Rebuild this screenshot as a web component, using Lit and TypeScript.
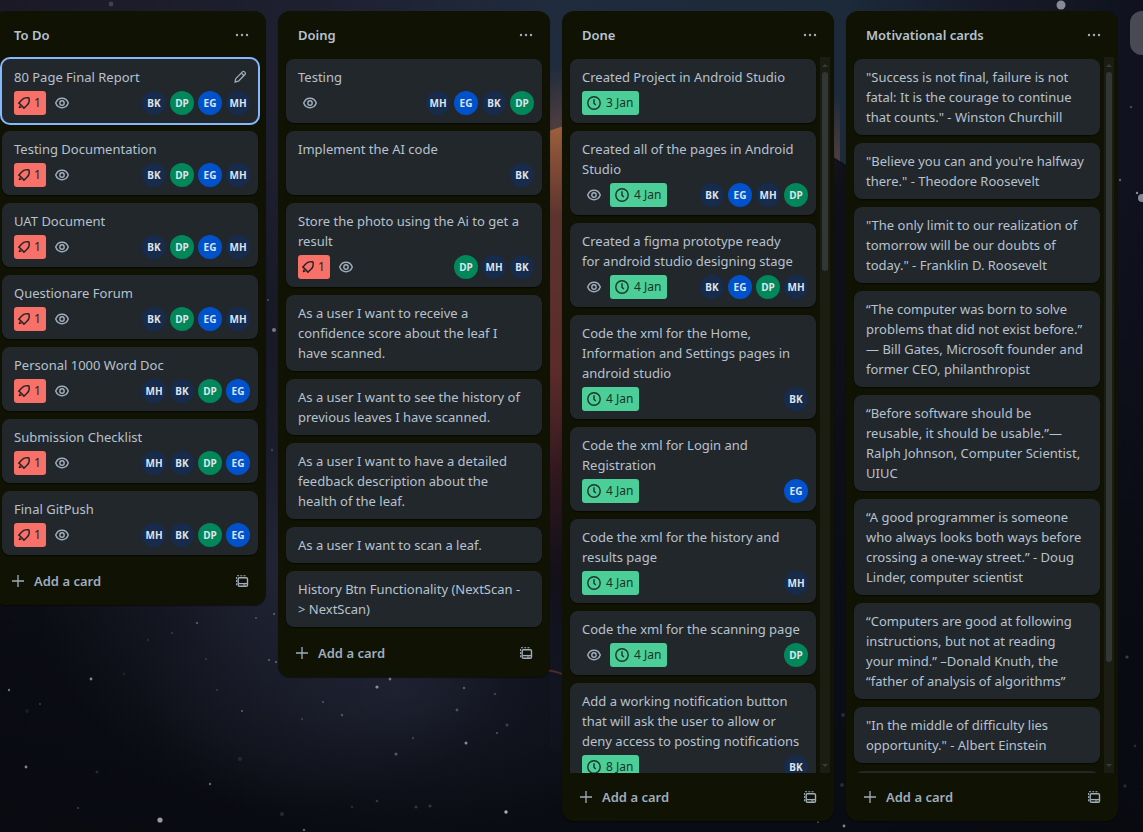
import { LitElement, html, svg, css, nothing } from "lit";
import { customElement, property } from "lit/decorators.js";
import { classMap } from "lit/directives/class-map.js";
import { styleMap } from "lit/directives/style-map.js";

type Card = {
  title: string;
  alert?: number;
  watch?: boolean;
  due?: string;
  members?: string;
  active?: boolean;
};

type List = {
  name: string;
  cards: Card[];
  thumb?: number;
};

const LISTS: List[] = [
  {
    name: "To Do",
    cards: [
      { title: "80 Page Final Report", alert: 1, watch: true, members: "BK DP EG MH", active: true },
      { title: "Testing Documentation", alert: 1, watch: true, members: "BK DP EG MH" },
      { title: "UAT Document", alert: 1, watch: true, members: "BK DP EG MH" },
      { title: "Questionare Forum", alert: 1, watch: true, members: "BK DP EG MH" },
      { title: "Personal 1000 Word Doc", alert: 1, watch: true, members: "MH BK DP EG" },
      { title: "Submission Checklist", alert: 1, watch: true, members: "MH BK DP EG" },
      { title: "Final GitPush", alert: 1, watch: true, members: "MH BK DP EG" },
    ],
  },
  {
    name: "Doing",
    cards: [
      { title: "Testing", watch: true, members: "MH EG BK DP" },
      { title: "Implement the AI code", members: "BK" },
      { title: "Store the photo using the Ai to get a result", alert: 1, watch: true, members: "DP MH BK" },
      { title: "As a user I want to receive a confidence score about the leaf I have\u00A0scanned." },
      { title: "As a user I want to see the history of previous leaves I have scanned." },
      { title: "As a user I want to have a detailed feedback description about the health of the leaf." },
      { title: "As a user I want to scan a leaf." },
      { title: "History Btn Functionality (NextScan -\u200B>\u00A0NextScan)" },
    ],
  },
  {
    name: "Done",
    thumb: 29,
    cards: [
      { title: "Created Project in Android Studio", due: "3 Jan" },
      { title: "Created all of the pages in Android Studio", watch: true, due: "4 Jan", members: "BK EG MH DP" },
      { title: "Created a figma prototype ready for\u00A0android studio designing stage", watch: true, due: "4 Jan", members: "BK EG DP MH" },
      { title: "Code the xml for the Home, Information and Settings pages in android studio", due: "4 Jan", members: "BK" },
      { title: "Code the xml for Login and Registration", due: "4 Jan", members: "EG" },
      { title: "Code the xml for the history and results page", due: "4 Jan", members: "MH" },
      { title: "Code the xml for the scanning page", watch: true, due: "4 Jan", members: "DP" },
      { title: "Add a working notification button that will ask the user to allow or deny access to posting notifications", due: "8 Jan", members: "BK" },
    ],
  },
  {
    name: "Motivational cards",
    thumb: 86,
    cards: [
      { title: "\"Success is not final, failure is not fatal: It is the courage to continue that counts.\" - Winston Churchill" },
      { title: "\"Believe you can and you're halfway there.\" - Theodore Roosevelt" },
      { title: "\"The only limit to our realization of tomorrow will be our doubts of today.\" - Franklin D. Roosevelt" },
      { title: "“The computer was born to solve problems that did not exist before.” — Bill Gates, Microsoft founder and former CEO, philanthropist" },
      { title: "“Before software should be reusable, it should be usable.”— Ralph Johnson, Computer Scientist, UIUC" },
      { title: "“A good programmer is someone who always looks both ways before crossing a one-way street.” - Doug Linder, computer scientist" },
      { title: "“Computers are good at following instructions, but not at reading your\u00A0mind.” –Donald Knuth, the “father of analysis of algorithms”" },
      { title: "\"In the middle of difficulty lies opportunity.\" - Albert Einstein" },
      { title: "" },
    ],
  },
];

const icon = (size: number, body: unknown) =>
  html`<svg width=${size} height=${size} viewBox="0 0 16 16" fill="none" stroke="currentColor" aria-hidden="true">${body}</svg>`;

const dots = () =>
  icon(16, svg`<g fill="currentColor" stroke="none"><circle cx="3" cy="8" r="1.2"/><circle cx="8" cy="8" r="1.2"/><circle cx="13" cy="8" r="1.2"/></g>`);

const pencil = () =>
  icon(16, svg`<g stroke-width="1.3" stroke-linejoin="round"><path d="M3 13.2l.8-3.6 6.600-6.700a1.500 1.500 0 0 1 2.100 0l.5.5a1.500 1.500 0 0 1 0 2.100l-6.600 6.700z"/><path d="M9.500 4.200l2.500 2.500"/></g>`);

const rocket = () =>
  icon(16, svg`<g stroke-width="1.400" stroke-linejoin="round"><path d="M2.700 8.200L6.200 4.600Q7.600 3 9.600 2.900L12.300 2.800Q13.200 2.800 13.200 3.700L13.100 6.400Q13 8.400 11.400 9.800L7.900 13.300L6.600 11.500L4.500 9.400z"/><path d="M4.200 10.400L3.300 12.700L5.600 11.800" stroke-width="1.200"/></g>`);

const eye = () =>
  icon(16, svg`<g stroke-width="1.4"><path d="M1.700 8C2.800 5 5.200 3.200 8 3.200S13.200 5 14.300 8C13.200 11 10.800 12.700 8 12.700S2.800 11 1.700 8z"/><circle cx="8" cy="8" r="2.200"/></g>`);

const clock = () =>
  icon(16, svg`<circle cx="8" cy="8" r="6.200" stroke-width="1.400"/><path d="M8 4.300V8.200L9.800 10" stroke-width="1.400"/>`);

const plus = () => icon(16, svg`<path d="M8 2v12M2 8h12" stroke-width="1.300"/>`);

const template = () =>
  icon(16, svg`<rect x="4.200" y="4.700" width="9.300" height="8.600" rx="1.300" stroke-width="1.400"/><path d="M4.500 10.600h9" stroke-width="1.300"/><path d="M9 12h2.500" stroke-width="1"/><path d="M2.600 12.300V3.600Q2.600 2.700 3.500 2.700H12.500" stroke-width="1.100" stroke-dasharray="2 1.200"/>`);

/* x, y, radius, opacity */
const STARS = [
  [1061, 5, 4.5, 0.6], [1142, 198, 4, 0.6], [1137, 193, 1.2, 0.6], [274, 330, 2, 0.5], [160, 820, 2.6, 0.7],
  [91, 679, 1.4, 0.6], [9, 690, 1.2, 0.5], [26, 767, 1.4, 0.6], [197, 623, 1.1, 0.4], [242, 711, 1, 0.4],
  [210, 784, 1.2, 0.45], [240, 759, 2, 0.12], [269, 660, 1, 0.4], [276, 662, 1, 0.45], [274, 614, 1, 0.4],
  [97, 772, 1.5, 0.15], [27, 711, 2, 0.08], [40, 704, 1, 0.25], [377, 687, 1.6, 0.6], [390, 679, 1.4, 0.5],
  [466, 743, 1.5, 0.6], [506, 812, 1.7, 0.8], [396, 754, 1.5, 0.35], [457, 710, 1.4, 0.3],
  [464, 688, 1.2, 0.35], [495, 694, 1, 0.3], [323, 702, 1, 0.35], [342, 715, 1.2, 0.3], [302, 719, 1, 0.25],
  [413, 738, 1.2, 0.2], [430, 806, 1.6, 0.2], [416, 807, 1.6, 0.18], [377, 801, 1.3, 0.2],
  [282, 814, 2, 0.15], [352, 807, 1.2, 0.15], [507, 725, 1.6, 0.22], [497, 733, 1, 0.35], [304, 830, 1.3, 0.4],
  [844, 826, 1.4, 0.6], [818, 822, 1, 0.4], [1131, 107, 1.3, 0.25], [1120, 180, 1.2, 0.4], [1127, 657, 1.6, 0.25],
  [1135, 746, 1.4, 0.15], [1125, 786, 1.8, 0.15], [111, 4, 2.4, 0.2], [843, 715, 2, 0.15], [842, 785, 2, 0.15],
  [148, 640, 1, 0.15], [124, 674, 1.6, 0.08], [172, 633, 1, 0.2], [206, 659, 1, 0.2],
  [256, 618, 1, 0.3], [217, 690, 1, 0.2], [78, 808, 0.9, 0.3], [268, 300, 1, 0.3], [272, 450, 1.2, 0.2],
];

@customElement("space-backdrop")
export class SpaceBackdrop extends LitElement {
  static styles = css`
    :host {
      display: block;
      overflow: hidden;
      background: #0a0c14;
    }
    .scene {
      display: block;
      width: 100%;
      height: 100%;
    }
  `;

  render() {
    return html`<svg class="scene" viewBox="0 0 1143 832" preserveAspectRatio="xMidYMid slice" aria-hidden="true">
      <defs>
        <linearGradient id="sky" x1="0" y1="0" x2="1" y2="0">
          <stop offset="0" stop-color="#1b1926"/>
          <stop offset="0.28" stop-color="#1e2030"/>
          <stop offset="0.48" stop-color="#202b3d"/>
          <stop offset="0.74" stop-color="#1c2a39"/>
          <stop offset="0.86" stop-color="#171b29"/>
          <stop offset="1" stop-color="#0f121e"/>
        </linearGradient>
        <linearGradient id="night" x1="0" y1="0" x2="0" y2="1">
          <stop offset="0.2" stop-color="#080a10" stop-opacity="0"/>
          <stop offset="0.75" stop-color="#080a10" stop-opacity="0.85"/>
          <stop offset="1" stop-color="#080a10" stop-opacity="0.95"/>
        </linearGradient>
        <radialGradient id="haze">
          <stop offset="0" stop-color="#30334a" stop-opacity="0.6"/>
          <stop offset="0.5" stop-color="#30334a" stop-opacity="0.25"/>
          <stop offset="1" stop-color="#30334a" stop-opacity="0"/>
        </radialGradient>
        <radialGradient id="glow">
          <stop offset="0.86" stop-color="#5e4440" stop-opacity="0.7"/>
          <stop offset="1" stop-color="#5e4440" stop-opacity="0"/>
        </radialGradient>
        <linearGradient id="planet" x1="0" y1="0" x2="0" y2="1">
          <stop offset="0" stop-color="#a66a40"/>
          <stop offset="0.06" stop-color="#8a5238"/>
          <stop offset="0.16" stop-color="#5c342f"/>
          <stop offset="0.4" stop-color="#5a2b2a"/>
          <stop offset="0.55" stop-color="#35191f"/>
          <stop offset="0.72" stop-color="#14101a"/>
          <stop offset="0.82" stop-color="#0f121c"/>
        </linearGradient>
        <linearGradient id="shade" x1="0" y1="0" x2="1" y2="0.35">
          <stop offset="0.45" stop-color="#0a0d17" stop-opacity="0"/>
          <stop offset="0.72" stop-color="#0a0d17" stop-opacity="0.95"/>
        </linearGradient>
        <clipPath id="lit-side"><rect x="550" y="0" width="593" height="832"/></clipPath>
        <clipPath id="upper"><rect x="550" y="0" width="290" height="240"/></clipPath>
      </defs>
      <rect width="1143" height="832" fill="url(#sky)"/>
      <rect width="1143" height="832" fill="url(#night)"/>
      <circle cx="662" cy="436" r="385" fill="url(#glow)" clip-path="url(#upper)"/>
      <g clip-path="url(#lit-side)">
        <circle cx="662" cy="439" r="328" fill="url(#planet)"/>
        <circle cx="662" cy="439" r="330" fill="url(#shade)"/>
      </g>
      <ellipse cx="290" cy="560" rx="260" ry="250" fill="url(#haze)"/>
      <ellipse cx="400" cy="690" rx="260" ry="150" fill="url(#haze)" opacity="0.7"/>
      <path d="M546 670q10 1 18 5" stroke="#4a2a2a" stroke-width="2" fill="none"/>
      ${STARS.map(([x, y, r, o]) => svg`<circle cx=${x} cy=${y} r=${r} fill="#d3d8e4" opacity=${o}/>`)}
    </svg>`;
  }
}

@customElement("board-card")
export class BoardCard extends LitElement {
  @property({ attribute: false }) card!: Card;

  static styles = css`
    :host {
      display: block;
      flex: none;
    }
    .card {
      min-height: 36px;
      box-sizing: border-box;
      padding: 8px 8px 8px 12px;
      border-radius: 8px;
      background: #22272b;
      box-shadow: 0 1px 1px rgba(3, 4, 4, 0.6);
    }
    .active {
      box-shadow: 0 0 0 2px #85b8ff;
    }
    .top {
      display: flex;
      align-items: flex-start;
      justify-content: space-between;
    }
    .title {
      margin: 0;
      padding-right: 4px;
      font-size: 13px;
      font-weight: 400;
      line-height: 20px;
    }
    .edit {
      display: flex;
      padding: 0;
      margin: 2px;
      border: 0;
      background: none;
      color: #9fadbc;
    }
    .meta {
      display: flex;
      justify-content: space-between;
      margin-top: 4px;
    }
    .badges,
    .members {
      display: flex;
      gap: 4px;
    }
    .badge {
      display: flex;
      align-items: center;
      gap: 4px;
      height: 24px;
      box-sizing: border-box;
      padding: 0 4px;
      border-radius: 3px;
      font-size: 12px;
      line-height: 20px;
      color: #9fadbc;
    }
    .alert {
      gap: 2px;
      padding: 0 5px 0 2px;
      background: #f87168;
      color: #1d2125;
    }
    .due {
      padding-right: 6px;
      background: #4bce97;
      color: #1c3329;
    }
    .avatar {
      display: flex;
      align-items: center;
      justify-content: center;
      width: 24px;
      height: 24px;
      border-radius: 50%;
      background: #172b4d;
      color: #dee4ea;
      font-size: 10px;
      font-weight: 700;
    }
    .dp {
      background: #00875a;
    }
    .eg {
      background: #0052cc;
    }
  `;

  render() {
    const { title, alert, watch, due, members, active } = this.card;
    const hasMeta = alert || watch || due || members;
    return html`<article class=${classMap({ card: true, active: !!active })}>
      <div class="top">
        <h3 class="title">${title}</h3>
        ${active ? html`<button class="edit" aria-label="Edit card">${pencil()}</button>` : nothing}
      </div>
      ${hasMeta
        ? html`<div class="meta">
            <div class="badges">
              ${alert ? html`<span class="badge alert">${rocket()}${alert}</span>` : nothing}
              ${watch ? html`<span class="badge">${eye()}</span>` : nothing}
              ${due ? html`<span class="badge due">${clock()}${due}</span>` : nothing}
            </div>
            <div class="members">
              ${(members ?? "")
                .split(" ")
                .filter(Boolean)
                .map((m) => html`<span class="avatar ${m.toLowerCase()}">${m}</span>`)}
            </div>
          </div>`
        : nothing}
    </article>`;
  }
}

@customElement("board-list")
export class BoardList extends LitElement {
  @property({ attribute: false }) list!: List;

  static styles = css`
    :host {
      display: flex;
      flex-direction: column;
      flex: 0 0 272px;
      box-sizing: border-box;
      max-height: 100%;
      border-radius: 12px;
      background: #101204;
      box-shadow: 0 1px 1px rgba(3, 4, 4, 0.5);
    }
    .head {
      display: flex;
      align-items: center;
      justify-content: space-between;
      flex: none;
      padding: 8px 8px 6px 20px;
    }
    .name {
      margin: 0;
      font-size: 13px;
      font-weight: 600;
      line-height: 20px;
    }
    .icon-button {
      display: flex;
      align-items: center;
      justify-content: center;
      width: 32px;
      height: 32px;
      padding: 0;
      border: 0;
      border-radius: 8px;
      background: none;
      color: #9fadbc;
    }
    .body {
      display: flex;
      flex: 0 1 auto;
      min-height: 0;
      margin: 0 4px;
    }
    .cards {
      display: flex;
      flex-direction: column;
      gap: 8px;
      flex: 1;
      min-width: 0;
      padding: 2px 4px;
      overflow-y: auto;
      scrollbar-width: none;
    }
    .track {
      display: flex;
      flex-direction: column;
      flex: none;
      width: 10px;
      background: #1b1d13;
    }
    .arrow {
      display: flex;
      align-items: center;
      justify-content: center;
      flex: none;
      height: 15px;
      color: #353d39;
    }
    .rail {
      flex: 1;
      padding: 0 2px;
    }
    .thumb {
      border-radius: 3px;
      background: #303734;
    }
    .foot {
      display: flex;
      align-items: center;
      justify-content: space-between;
      flex: none;
      padding: 8px;
    }
    .add {
      display: flex;
      align-items: center;
      gap: 8px;
      height: 32px;
      padding: 0 8px;
      border: 0;
      border-radius: 8px;
      background: none;
      color: #9fadbc;
      font: 600 13px / 20px "Noto Sans", "Open Sans", sans-serif;
    }
  `;

  render() {
    const { name, cards, thumb } = this.list;
    return html`
      <header class="head">
        <h2 class="name">${name}</h2>
        <button class="icon-button" aria-label="List actions">${dots()}</button>
      </header>
      <div class="body">
        <div class="cards">${cards.map((card) => html`<board-card .card=${card}></board-card>`)}</div>
        ${thumb
          ? html`<div class="track" aria-hidden="true">
              <span class="arrow"><svg width="6" height="4" viewBox="0 0 6 4"><path d="M0 4l3-3 3 3z" fill="currentColor"/></svg></span>
              <div class="rail"><div class="thumb" style=${styleMap({ height: `${thumb}%` })}></div></div>
              <span class="arrow"><svg width="6" height="4" viewBox="0 0 6 4"><path d="M0 0l3 3 3-3z" fill="currentColor"/></svg></span>
            </div>`
          : nothing}
      </div>
      <footer class="foot">
        <button class="add">${plus()}Add a card</button>
        <button class="icon-button" aria-label="Create from template">${template()}</button>
      </footer>
    `;
  }
}

@customElement("app-root")
export class AppRoot extends LitElement {
  static styles = css`
    :host {
      display: block;
      position: relative;
      height: 100vh;
      overflow: hidden;
      color: #b6c2cf;
      font-family: "Noto Sans", "Open Sans", sans-serif;
    }
    .backdrop {
      position: absolute;
      inset: 0;
    }
    .board {
      position: relative;
      display: flex;
      align-items: flex-start;
      gap: 12px;
      height: 100%;
      box-sizing: border-box;
      padding: 11px 0;
      margin-left: -6px;
    }
    .new-list {
      flex: 0 0 272px;
      height: 44px;
      border: 0;
      border-radius: 12px;
      background: rgba(255, 255, 255, 0.24);
    }
  `;

  render() {
    return html`
      <space-backdrop class="backdrop"></space-backdrop>
      <main class="board">
        ${LISTS.map((list) => html`<board-list .list=${list}></board-list>`)}
        <button class="new-list" aria-label="Add another list"></button>
      </main>
    `;
  }
}
